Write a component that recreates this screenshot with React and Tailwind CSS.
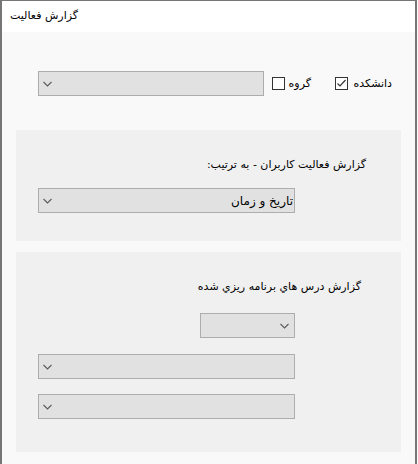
import React from "react";

const font = { fontFamily: '"DejaVu Sans", Tahoma, "Noto Sans", sans-serif' };

function Chevron() {
  return (
    <svg width="9" height="6" viewBox="0 0 9 6" className="block">
      <polyline points="0.5,1 4.5,5 8.5,1" fill="none" stroke="#5a5a5a" strokeWidth="1.1" />
    </svg>
  );
}

function Select({ className = "", text, chevronRight = false }) {
  return (
    <div
      className={`h-[25px] bg-[#e1e1e1] border border-[#adadad] flex items-center ${chevronRight ? "justify-end pr-[5px]" : "justify-between pl-[4px] pr-[1px]"} ${className}`}
    >
      {!chevronRight && <Chevron />}
      {text && (
        <span dir="rtl" className="text-[12px] leading-none text-black">
          {text}
        </span>
      )}
      {chevronRight && <Chevron />}
    </div>
  );
}

function Checkbox({ checked }) {
  return (
    <div className="w-[13px] h-[13px] border border-[#333333] bg-white flex items-center justify-center">
      {checked && (
        <svg width="11" height="11" viewBox="0 0 11 11" className="block">
          <polyline points="1.5,5.5 4,8 9.5,2" fill="none" stroke="#333333" strokeWidth="1.2" />
        </svg>
      )}
    </div>
  );
}

export default function App() {
  return (
    <div className="w-[418px] h-[464px] bg-[#f9f9f9]" style={font}>
      <div className="w-[417px] h-[464px] border-l-2 border-r-2 border-t border-[#767676] flex flex-col">
        <div className="h-[31px] bg-white flex items-center pl-[8px] text-[11px] text-black">
          <span dir="rtl">گزارش فعاليت</span>
        </div>
        <div className="flex-1 bg-[#f9f9f9]">
          {/* Row 1 */}
          <div className="mt-[39px] flex items-center h-[25px]">
            <Select className="ml-[36px] w-[226px]" />
            <div className="ml-[8px] flex items-center">
              <Checkbox />
              <span dir="rtl" className="ml-[2px] w-[24px] text-[11px] text-black leading-none text-right whitespace-nowrap">گروه</span>
            </div>
            <div className="ml-[24px] flex items-center">
              <Checkbox checked />
              <span dir="rtl" className="ml-[4px] w-[40px] text-[11px] text-black leading-none text-right whitespace-nowrap">دانشکده</span>
            </div>
          </div>

          {/* Panel 1 */}
          <div className="mt-[34px] ml-[14px] w-[385px] h-[111px] bg-[#f0f0f0] pt-[28px]">
            <div dir="rtl" className="pr-[35px] text-[11px] leading-[14px] text-black">
              گزارش فعاليت كاربران - به ترتيب:
            </div>
            <Select className="mt-[16px] ml-[22px] w-[257px]" text="تاريخ و زمان" />
          </div>

          {/* Panel 2 */}
          <div className="mt-[11px] ml-[14px] w-[385px] h-[200px] bg-[#f0f0f0] pt-[28px]">
            <div dir="rtl" className="pr-[40px] text-[11px] leading-[14px] text-black">
              گزارش درس هاي برنامه ريزي شده
            </div>
            <Select className="mt-[19px] ml-[184px] w-[95px]" chevronRight />
            <Select className="mt-[16px] ml-[22px] w-[257px]" />
            <Select className="mt-[15px] ml-[22px] w-[257px]" />
          </div>
        </div>
      </div>
    </div>
  );
}
